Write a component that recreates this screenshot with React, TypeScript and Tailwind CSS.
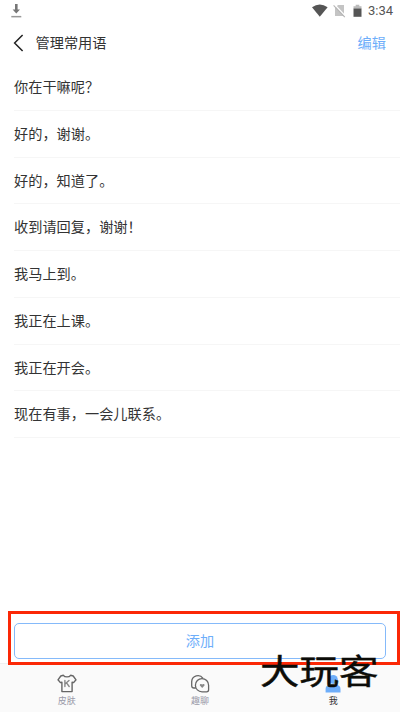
const phrases = [
  '你在干嘛呢？',
  '好的，谢谢。',
  '好的，知道了。',
  '收到请回复，谢谢！',
  '我马上到。',
  '我正在上课。',
  '我正在开会。',
  '现在有事，一会儿联系。',
];

function StatusBar() {
  return (
    <div className="flex h-[22px] shrink-0 items-center justify-between pl-[11px] pr-[7px]">
      <svg width="11" height="14" viewBox="0 0 11 14" fill="#777">
        <path d="M4 0h2.6v5.6h2.4L5.3 9.6 1.6 5.6H4z" />
        <path d="M.3 11.9h10v1.5H.3z" fill="#999" />
      </svg>
      <div className="flex items-center">
        <svg width="16" height="14" viewBox="0 0 16 14" fill="#555">
          <path d="M0 3.2Q7.8-2.1 15.6 3.2L7.8 12.8z" />
        </svg>
        <svg className="ml-[5px]" width="13" height="14" viewBox="0 0 13 14">
          <path d="M5 1h6v11H2V4z" fill="#c4c4c4" />
          <path d="M1.7 .8 12.7 12.4" stroke="#fff" strokeWidth="1.4" />
          <path d="M.6 1.3 11.8 13.2" stroke="#b5b5b5" strokeWidth="1.1" />
        </svg>
        <svg className="ml-[7px]" width="9" height="14" viewBox="0 0 9 14">
          <path d="M2.7.8h3.6v1.4h2.2v2.6h-8V2.2h2.2z" fill="#bbb" />
          <path d="M.5 4.5h8v8.3h-8z" fill="#555" />
        </svg>
        <span className="ml-[6px] font-['Roboto',sans-serif] text-[13px] leading-[22px] text-[#555]">3:34</span>
      </div>
    </div>
  );
}

function Header() {
  return (
    <header className="flex h-[42px] shrink-0 items-center pl-[13px] pr-[14px] text-[14.2px]">
      <svg width="11" height="18" viewBox="0 0 11 18" fill="none" stroke="#222" strokeWidth="1.5">
        <path d="M9.6 1 1.6 9l8 8" />
      </svg>
      <h1 className="ml-[11.5px] flex-1 text-[#333]">管理常用语</h1>
      <button className="text-[#6eaefa]">编辑</button>
    </header>
  );
}

function TabBar() {
  return (
    <nav className="grid h-[49px] shrink-0 grid-cols-3 border-t border-[#f0f0f0] bg-[#fafafa] text-[9px] leading-[13px] text-[#9999a8]">
      <div className="flex flex-col items-center pt-[10px]">
        <svg width="20" height="20" viewBox="0 0 20 20" fill="none" stroke="#666" strokeWidth="1.4" strokeLinejoin="round" strokeLinecap="round">
          <path d="M6.4 1.3C7.8 3.4 12.2 3.4 13.6 1.3L16.2 2 19 5.8 16.6 8.6 15.1 8.2V17.6H4.9V8.2L3.4 8.6 1 5.8 3.8 2z" />
          <path d="M7.9 6.5v6M12 6.5 8.3 9.8M9.5 8.8l2.7 3.7" stroke="#888" />
        </svg>
        <span>皮肤</span>
      </div>
      <div className="flex flex-col items-center pt-[10px]">
        <svg width="20" height="20" viewBox="0 0 20 20" fill="none" stroke="#666" strokeWidth="1.3" strokeLinejoin="round">
          <path d="M5.8 14H4Q1.7 14 1.7 11.8V7.6A6.2 6.2 0 0 1 13 4.4" />
          <path d="M12 4.6a6.6 6.6 0 0 1 6.6 6.6v4.6q0 2-2 2H12a6.6 6.6 0 0 1 0-13.2z" />
          <path d="M12.2 14 9.9 11.6C9.3 10 11.3 9.3 12.2 10.6c.9-1.3 2.9-.6 2.3 1z" fill="#888" stroke="none" />
        </svg>
        <span>趣聊</span>
      </div>
      <div className="flex flex-col items-center pt-[10px] text-[#333]">
        <svg width="18" height="20" viewBox="0 0 18 20" fill="#6eaefa">
          <circle cx="9.3" cy="5.4" r="4.5" />
          <path d="M1.6 18.4v-3.3Q1.6 10.9 6 10.9h6.1q4.4 0 4.4 4.2v3.3z" />
        </svg>
        <span>我</span>
      </div>
    </nav>
  );
}

export default function App() {
  return (
    <div className="relative flex h-[712px] w-[400px] flex-col overflow-hidden bg-white font-['Noto_Sans_CJK_SC',sans-serif]">
      <StatusBar />
      <Header />
      <ul className="flex-1 pl-[14px] text-[14.2px] text-[#333]">
        {phrases.map((phrase) => (
          <li key={phrase} className="flex h-[46.75px] items-center border-b border-[#f6f6f6]">
            {phrase}
          </li>
        ))}
      </ul>
      <div className="h-[40px] shrink-0 px-[14px]">
        <button className="h-[36px] w-full rounded-[5px] border border-[#85bafa] text-[14.2px] text-[#6eaefa]">添加</button>
      </div>
      <TabBar />
      <div className="absolute left-[8px] top-[611px] h-[54px] w-[392px] border-[3px] border-[#fb2806]" />
      <div className="absolute left-[260px] top-[647px] origin-top scale-y-[0.87] whitespace-nowrap text-[39.5px] font-normal leading-[50px] text-[#0c0c08] [-webkit-text-stroke:0.5px_#0c0c08]">大玩客</div>
    </div>
  );
}
